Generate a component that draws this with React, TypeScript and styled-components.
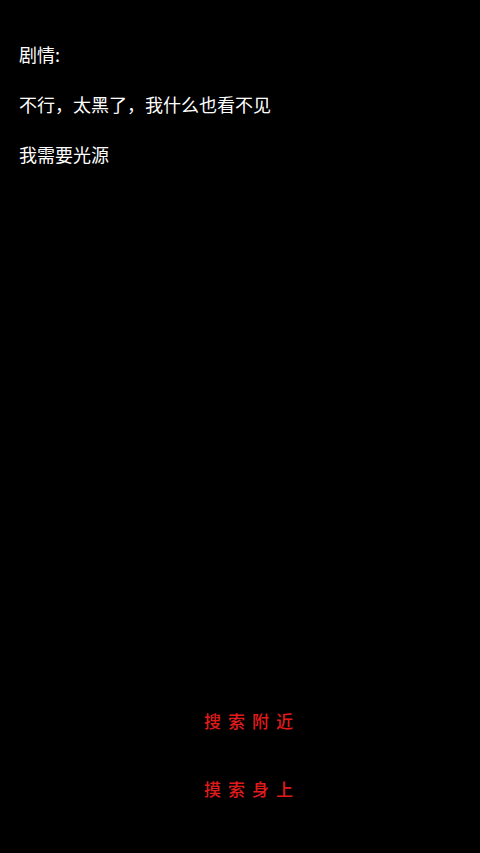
import { createGlobalStyle } from 'styled-components';
import styled from 'styled-components';

const GlobalStyle = createGlobalStyle`
  html, body { margin: 0; padding: 0; background: #000; }
  body { font-family: "Noto Sans CJK SC", "Noto Sans", sans-serif; }
`;

const Screen = styled.div`
  width: 480px;
  height: 853px;
  background: #000;
  display: flex;
  flex-direction: column;
  box-sizing: border-box;
  padding-top: 29px;
`;

const Story = styled.div`
  flex: 1;
  display: flex;
  flex-direction: column;
  padding-left: 19px;
`;

const Line = styled.p`
  margin: 0;
  color: #fff;
  font-size: 18px;
  font-weight: 400;
  line-height: 50px;
  height: 50px;
`;

const Actions = styled.div`
  display: flex;
  flex-direction: column;
  align-items: center;
  padding: 0 0 48px 24px;
  gap: 35px;
`;

const Action = styled.button<{ $color?: string }>`
  background: none;
  border: none;
  padding: 0;
  color: ${p => p.$color ?? '#e01b1b'};
  font-family: inherit;
  font-size: 17px;
  font-weight: 500;
  letter-spacing: 7px;
  line-height: 33px;
  cursor: pointer;
`;

const lines = ['剧情:', '不行，太黑了，我什么也看不见', '我需要光源'];

export default function App() {
  return (
    <>
      <GlobalStyle />
      <Screen>
        <Story>
          {lines.map(t => (
            <Line key={t}>{t}</Line>
          ))}
        </Story>
        <Actions>
          <Action>搜索附近</Action>
          <Action>摸索身上</Action>
        </Actions>
      </Screen>
    </>
  );
}
